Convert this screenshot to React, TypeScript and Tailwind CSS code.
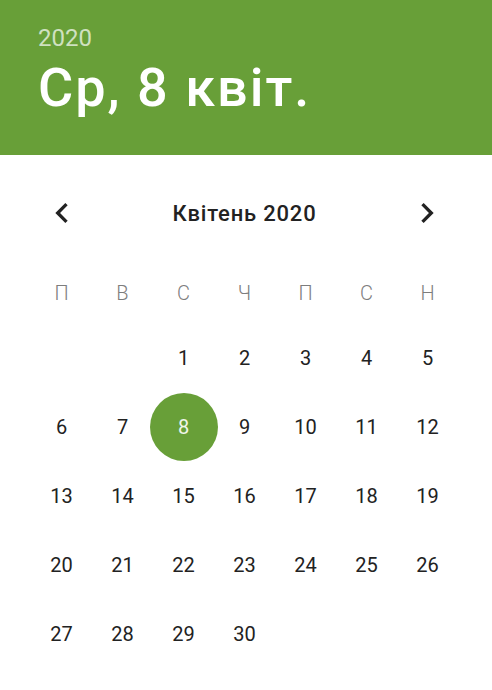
import React from "react";

const weekdays = ["П", "В", "С", "Ч", "П", "С", "Н"];

export default function App() {
  const cells: (number | null)[] = [null, null];
  for (let d = 1; d <= 30; d++) cells.push(d);
  const rows: (number | null)[][] = [];
  for (let i = 0; i < cells.length; i += 7) rows.push(cells.slice(i, i + 7));
  return (
    <div className="w-[492px] h-[690px] bg-white overflow-hidden" style={{ fontFamily: "Roboto, 'Noto Sans', sans-serif" }}>
      <div className="h-[155px] bg-[#689f38] pl-[38px] pt-[22px]">
        <div className="text-[24px] leading-[32px] text-white/70">2020</div>
        <div className="text-[54px] leading-[60px] font-medium text-white mt-[4px] tracking-[2px]">Ср, 8 квіт.</div>
      </div>
      <div className="px-[31px]">
        <div className="w-[427px] flex items-center justify-between h-[40px] mt-[38px]">
          <div className="w-[61px] flex justify-center">
            <svg width="40" height="40" viewBox="0 0 24 24"><path d="M15.41 7.41L14 6l-6 6 6 6 1.41-1.41L10.83 12z" fill="#222" /></svg>
          </div>
          <div className="text-[22px] font-medium text-[#222] tracking-[0.8px]">Квітень 2020</div>
          <div className="w-[61px] flex justify-center">
            <svg width="40" height="40" viewBox="0 0 24 24"><path d="M10 6L8.59 7.41 13.17 12l-4.58 4.59L10 18l6-6z" fill="#222" /></svg>
          </div>
        </div>
        <div className="w-[427px] grid grid-cols-7 mt-[45px] h-[30px] items-center">
          {weekdays.map((w, i) => (
            <div key={i} className="text-center text-[20px] font-light text-[#7d7d7d]">{w}</div>
          ))}
        </div>
        <div className="w-[427px] mt-[15px]">
          {rows.map((r, ri) => (
            <div key={ri} className="grid grid-cols-7 h-[69px]">
              {Array.from({ length: 7 }).map((_, ci) => {
                const d = r[ci];
                return (
                  <div key={ci} className="flex items-center justify-center">
                    {d === 8 ? (
                      <div className="shrink-0 w-[68px] h-[68px] rounded-full bg-[#689f38] flex items-center justify-center text-[20px] text-white/90">8</div>
                    ) : d ? (
                      <span className="text-[20px] text-[#222]">{d}</span>
                    ) : null}
                  </div>
                );
              })}
            </div>
          ))}
        </div>
      </div>
    </div>
  );
}
